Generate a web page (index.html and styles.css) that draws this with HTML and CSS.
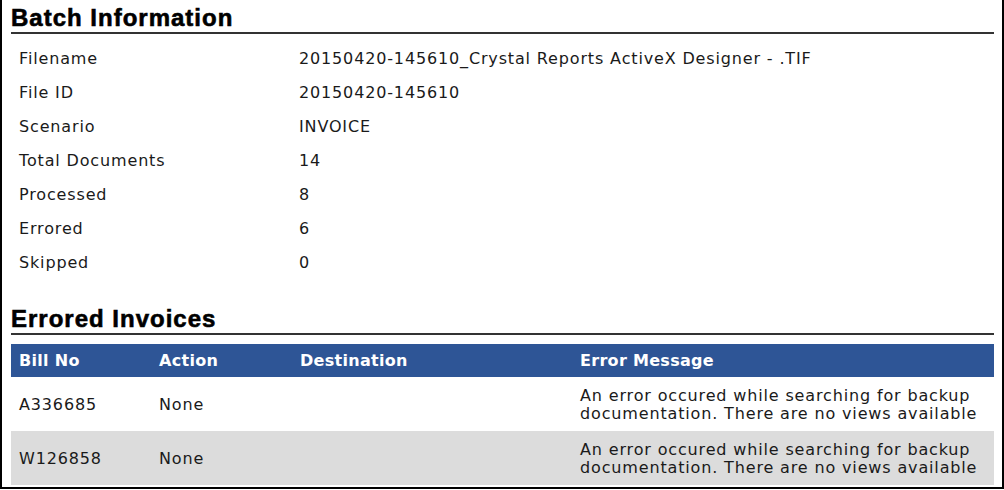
FILE: index.html
```html
<!DOCTYPE html>
<html>
<head>
<meta charset="utf-8">
<link rel="stylesheet" href="styles.css">
</head>
<body>
<div class="frame">
  <section class="section">
    <h2 class="heading">Batch Information</h2>
    <div class="info">
      <div class="info-row"><span class="label">Filename</span><span class="value">20150420-145610_Crystal Reports ActiveX Designer - .TIF</span></div>
      <div class="info-row"><span class="label">File ID</span><span class="value">20150420-145610</span></div>
      <div class="info-row"><span class="label">Scenario</span><span class="value">INVOICE</span></div>
      <div class="info-row"><span class="label">Total Documents</span><span class="value">14</span></div>
      <div class="info-row"><span class="label">Processed</span><span class="value">8</span></div>
      <div class="info-row"><span class="label">Errored</span><span class="value">6</span></div>
      <div class="info-row"><span class="label">Skipped</span><span class="value">0</span></div>
    </div>
  </section>
  <section class="section section-errors">
    <h2 class="heading">Errored Invoices</h2>
    <table class="grid">
      <thead>
        <tr><th class="c-bill">Bill No</th><th class="c-action">Action</th><th class="c-dest">Destination</th><th class="c-msg">Error Message</th></tr>
      </thead>
      <tbody>
        <tr><td>A336685</td><td>None</td><td></td><td class="msg"><span class="line">An error occured while searching for backup</span><span class="line">documentation. There are no views available</span></td></tr>
        <tr class="alt"><td>W126858</td><td>None</td><td></td><td class="msg"><span class="line">An error occured while searching for backup</span><span class="line">documentation. There are no views available</span></td></tr>
      </tbody>
    </table>
  </section>
</div>
</body>
</html>
```
FILE: styles.css
```css
html, body {
  margin: 0;
  padding: 0;
  background: #fff;
}
.frame {
  box-sizing: border-box;
  width: 1004px;
  height: 489px;
  border: 2px solid #000;
  border-top: none;
  padding: 0 8px 0 9px;
  font-family: "DejaVu Sans", Verdana, sans-serif;
  font-size: 16px;
  letter-spacing: 0.85px;
  color: #1a1a1a;
}
.heading {
  margin: 0;
  padding-top: 4px;
  font-family: "Liberation Sans", Arial, sans-serif;
  font-size: 24px;
  line-height: 28px;
  font-weight: bold;
  letter-spacing: 1px;
  color: #000;
  -webkit-text-stroke: 0.6px #000;
  border-bottom: 2px solid #333;
}
.info {
  margin-top: 7px;
  display: flex;
  flex-direction: column;
}
.info-row {
  display: flex;
  height: 34px;
  align-items: center;
}
.label {
  width: 280px;
  padding-left: 8px;
  flex: none;
}
.section-errors {
  margin-top: 22px;
}
.grid {
  margin-top: 9px;
  width: 100%;
  border-collapse: collapse;
  table-layout: fixed;
}
.grid th {
  background: #2e5596;
  color: #fff;
  font-weight: bold;
  letter-spacing: 0.3px;
  text-align: left;
  height: 33px;
  padding: 0 0 0 8px;
  box-sizing: border-box;
}
.c-bill { width: 140px; }
.c-action { width: 141px; }
.c-dest { width: 280px; }
.grid td {
  padding: 10px 0 8px 8px;
  line-height: 18px;
  vertical-align: middle;
}
.grid tr.alt td {
  background: #dcdcdc;
}
.grid td.msg .line {
  display: block;
  white-space: nowrap;
}
```
